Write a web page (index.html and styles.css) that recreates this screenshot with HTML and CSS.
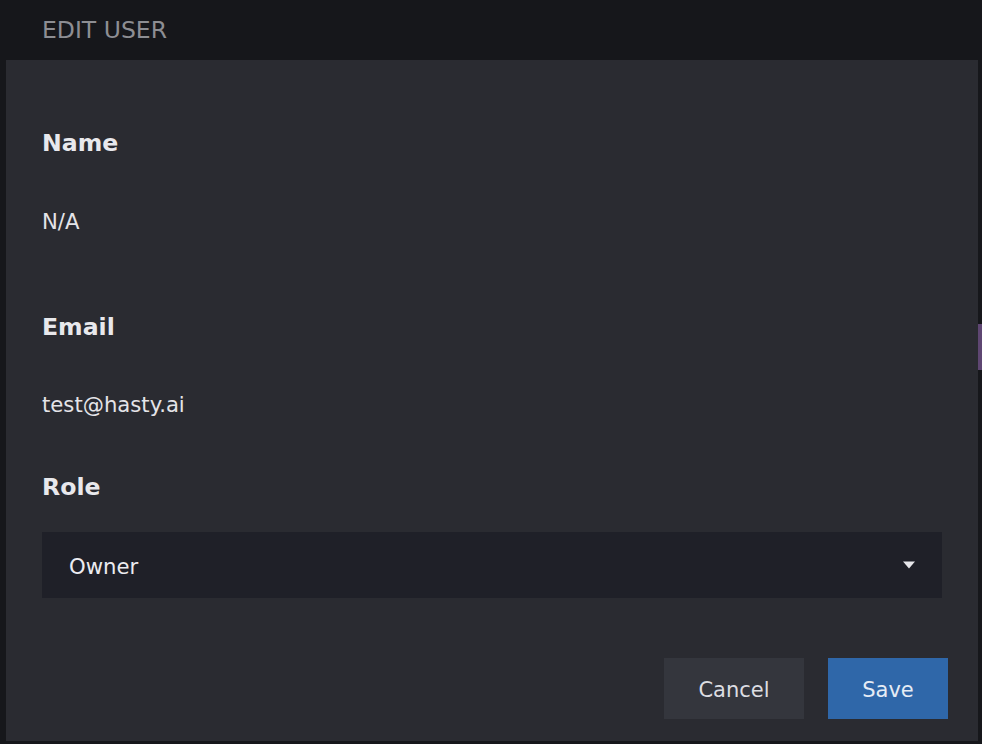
FILE: index.html
```html
<!DOCTYPE html>
<html>
<head>
<meta charset="utf-8">
<link rel="stylesheet" href="styles.css">
</head>
<body>
<div class="page">
  <header class="header">EDIT USER</header>
  <div class="body-row">
    <section class="panel">
      <div class="field">
        <h2 class="label">Name</h2>
        <p class="value">N/A</p>
      </div>
      <div class="field">
        <h2 class="label">Email</h2>
        <p class="value">test@hasty.ai</p>
      </div>
      <div class="field field-role">
        <h2 class="label">Role</h2>
        <div class="select">
          <span class="select-text">Owner</span>
          <svg class="caret" width="14" height="8" viewBox="0 0 14 8"><path d="M1 0.5 L13 0.5 L7 7.5 Z" fill="#e6e6ea"/></svg>
        </div>
      </div>
      <div class="actions">
        <button class="btn btn-cancel">Cancel</button>
        <button class="btn btn-save">Save</button>
      </div>
    </section>
    <div class="gutter"><div class="gutter-mark"></div></div>
  </div>
</div>
</body>
</html>
```
FILE: styles.css
```css
html, body {
  margin: 0;
  padding: 0;
  background: #16171b;
  width: 982px;
  height: 744px;
  overflow: hidden;
  font-family: "DejaVu Sans", "Open Sans", sans-serif;
}
.page {
  display: flex;
  flex-direction: column;
  height: 744px;
}
.header {
  height: 60px;
  box-sizing: border-box;
  padding-left: 42px;
  line-height: 60px;
  font-size: 23.5px;
  color: #8d8e93;
}
.body-row {
  display: flex;
  padding-left: 6px;
}
.panel {
  width: 972px;
  height: 681px;
  background: #2a2b31;
  box-sizing: border-box;
  padding: 0 30px 0 36px;
  display: flex;
  flex-direction: column;
}
.gutter {
  width: 4px;
}
.gutter-mark {
  margin-top: 264px;
  height: 46px;
  background: #5e4672;
}
.field {
  display: flex;
  flex-direction: column;
}
.label {
  margin: 0;
  font-size: 23.6px;
  font-weight: 700;
  color: #e8e8ec;
  height: 34px;
  line-height: 34px;
}
.value {
  margin: 0;
  font-size: 21.2px;
  color: #e4e4e8;
  height: 30px;
  line-height: 30px;
}
.field:nth-child(1) .label { margin-top: 66px; }
.field:nth-child(1) .value { margin-top: 47px; }
.field:nth-child(2) .label { margin-top: 73px; }
.field:nth-child(2) .value { margin-top: 46px; }
.field-role .label { margin-top: 50px; }
.select {
  margin-top: 28px;
  width: 900px;
  height: 66px;
  background: #1f2028;
  display: flex;
  align-items: center;
  justify-content: space-between;
  box-sizing: border-box;
  padding: 2px 26px 0 27px;
}
.select-text {
  font-size: 21.2px;
  color: #ececf0;
}
.caret { display: block; margin-top: -2px; }
.actions {
  margin-top: 60px;
  display: flex;
  justify-content: flex-end;
  gap: 24px;
}
.btn {
  border: none;
  height: 61px;
  font-family: inherit;
  font-size: 21px;
  color: #dcdde2;
  padding: 3px 0 0;
}
.btn-cancel {
  width: 140px;
  background: #34363d;
}
.btn-save {
  width: 120px;
  background: #2f67a9;
  color: #e6ecf5;
}
```
